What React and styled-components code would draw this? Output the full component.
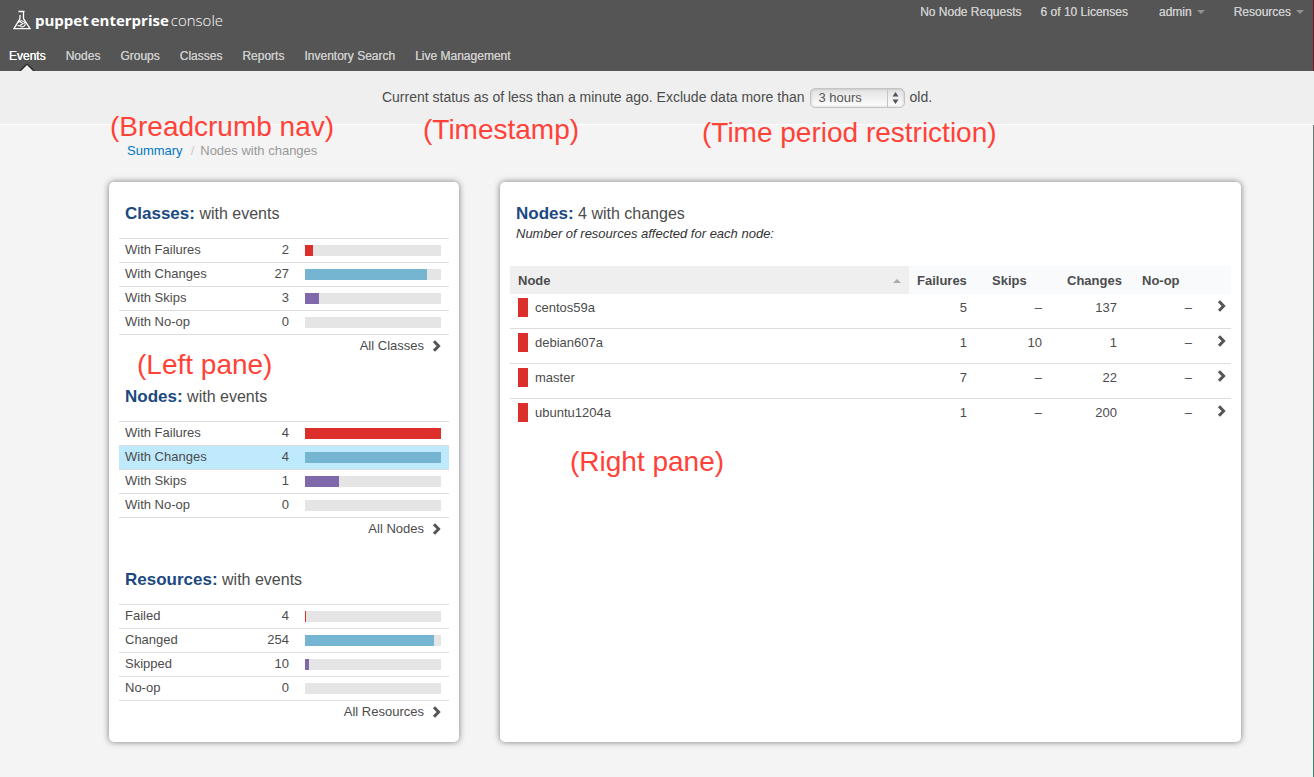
import React from "react";
import styled, { createGlobalStyle } from "styled-components";

const GlobalStyle = createGlobalStyle`
  * { box-sizing: border-box; }
  body {
    margin: 0;
    background: #f4f4f4;
    color: #4c4c4c;
    font: 13px/18px "Liberation Sans", Arial, sans-serif;
  }
  a { color: inherit; text-decoration: none; }
`;

const Page = styled.div`
  min-height: 100vh;
  position: relative;
  background: linear-gradient(#777, #3c8371) right / 1px 100% no-repeat;
`;

const Header = styled.header`
  background: #555;
  height: 71px;
  display: flex;
  justify-content: space-between;
  align-items: flex-start;
  border-right: 1px solid #7a1526;
`;

const Brand = styled.a`
  display: flex;
  align-items: center;
  height: 24px;
  margin: 8px 0 0 12px;
  color: #fff;
  font: 15px/24px "Open Sans", sans-serif;
`;

const BrandStrong = styled.span`
  display: flex;
  gap: 2px;
  font-weight: 700;
  margin-left: 3px;
`;

const BrandLight = styled.span`
  font-weight: 300;
  margin-left: 2px;
`;

const MainNav = styled.nav`
  display: flex;
  gap: 20px;
  padding: 15px 0 0 9px;
`;

const NavLink = styled.a`
  position: relative;
  height: 24px;
  font-size: 12px;
  color: ${(p) => (p.$active ? "#fff" : "#ccc")};
  text-shadow: 0 0 currentColor;
`;

const Pointer = styled.svg`
  position: absolute;
  left: 50%;
  bottom: 0;
  transform: translateX(-50%);
`;

const UserNav = styled.nav`
  display: flex;
  color: #ccc;
  font-size: 12px;
  padding: 3px 9px 0 0;
  text-shadow: 0 0 currentColor;
`;

const UserItem = styled.a`
  display: flex;
  align-items: center;
  gap: 5px;
  margin-left: ${(p) => p.$gap}px;
`;

const StatusBar = styled.form`
  display: flex;
  align-items: center;
  justify-content: center;
  gap: 5px;
  height: 54px;
  background: #efefef;
  border-bottom: 1px solid #fff;
  font-size: 14px;
  line-height: 20px;
`;

const StatusText = styled.label`
  padding-bottom: 2px;
`;

const SelectWrap = styled.span`
  position: relative;
  display: flex;
`;

const PeriodSelect = styled.select`
  appearance: none;
  width: 95px;
  height: 20px;
  padding: 0 8px;
  border: 1px solid #c4c4c4;
  border-radius: 5px;
  background: linear-gradient(#e2e2e2, #fdfdfd);
  box-shadow: inset 0 0 3px rgba(0, 0, 0, 0.2);
  color: #555;
  font: 13px/18px "Liberation Sans", Arial, sans-serif;
`;

const Stepper = styled.svg`
  position: absolute;
  right: 0;
  top: 0;
  pointer-events: none;
`;

const Content = styled.main`
  margin: 0 73px 0 109px;
  padding-bottom: 34px;
`;

const Breadcrumb = styled.nav`
  display: flex;
  height: 57px;
  padding: 17px 0 0 18px;
  color: #999;
`;

const Crumb = styled.a`
  color: #0077c2;
`;

const Slash = styled.span`
  color: #ccc;
  margin: 0 6px 0 8px;
`;

const Panes = styled.div`
  display: grid;
  grid-template-columns: 350px 1fr;
  gap: 41px;
`;

const Pane = styled.section`
  background: #fff;
  border-radius: 5px;
  box-shadow: 0 0 6px rgba(0, 0, 0, 0.5);
  padding: 20px 10px 15px;
`;

const Heading = styled.h2`
  margin: 0;
  padding-left: 6px;
  font-size: 16px;
  line-height: 24px;
  font-weight: 400;
`;

const Accent = styled.strong`
  font-size: 17px;
  color: #1b4980;
`;

const Note = styled.p`
  margin: 0 0 24px;
  padding-left: 6px;
  line-height: 16px;
  font-style: italic;
  color: #333;
`;

const Group = styled.div`
  height: 159px;
  margin-bottom: 24px;
  &:last-child { margin-bottom: 0; }
`;

const List = styled.ul`
  list-style: none;
  margin: 12px 0 0;
  padding: 0;
  border-top: 1px solid #ddd;
`;

const Item = styled.li`
  display: grid;
  grid-template-columns: 1fr 40px 136px;
  column-gap: 16px;
  align-items: start;
  height: 24px;
  padding: 0 8px 0 6px;
  line-height: 22px;
  border-bottom: 1px solid #ddd;
  background: ${(p) => (p.$selected ? "#bfe9fc" : "transparent")};
`;

const Count = styled.span`
  text-align: right;
`;

const Track = styled.span`
  height: 11px;
  margin-top: 6px;
  background: #e5e5e5;
`;

const Fill = styled.span`
  display: block;
  height: 11px;
  background: ${(p) => p.$color};
`;

const AllLink = styled.a`
  display: flex;
  justify-content: flex-end;
  align-items: center;
  gap: 8px;
  height: 22px;
  padding-right: 8px;
`;

const Table = styled.table`
  width: 100%;
  border-collapse: separate;
  border-spacing: 0;
  table-layout: fixed;
`;

const Th = styled.th`
  width: ${(p) => p.$width};
  height: 28px;
  padding: 2px 8px 0;
  text-align: left;
  background: ${(p) => (p.$sorted ? "#efefef" : "#f9fafc")};
`;

const SortHead = styled.span`
  display: flex;
  justify-content: space-between;
  align-items: center;
`;

const Td = styled.td`
  height: 35px;
  padding: 5px 17px 0 8px;
  vertical-align: top;
  text-align: right;
  border-bottom: 1px solid #ddd;
  tr:last-child > & { border-bottom-color: transparent; }
`;

const NameCell = styled(Td)`
  padding-top: 4px;
  text-align: left;
`;

const ArrowCell = styled(Td)`
  padding: 5px 5px 0 0;
`;

const NodeName = styled.a`
  display: flex;
  align-items: center;
  gap: 7px;
`;

const Swatch = styled.span`
  width: 10px;
  height: 19px;
  background: #dc2f2b;
`;

const Label = styled.span`
  position: absolute;
  left: ${(p) => p.$x}px;
  top: ${(p) => p.$y}px;
  color: #ff4238;
  font-size: 28px;
  line-height: 32px;
  white-space: nowrap;
  pointer-events: none;
`;

const Caret = () => (
  <svg width="8" height="4" viewBox="0 0 8 4"><path d="M0 0h8L4 4z" fill="#929292" /></svg>
);

const Chevron = () => (
  <svg width="9" height="12" viewBox="0 0 9 12">
    <path d="M2 1.200 6.600 6 2 10.800" fill="none" stroke="#555" strokeWidth="3" />
  </svg>
);

const Flask = () => (
  <svg width="20" height="21" viewBox="0 0 20 21" fill="none" stroke="#fff">
    <path d="M6.500 1.500h6M11.500 2v6.500L18 18.700H2L8 8.500V5" strokeWidth="1.300" />
    <path d="M6 12.500c1.500-2.500 6-2.500 7 .5s-2 4.500-4.500 3.500M7.500 11.500l3.500 2-3 2M5.500 15.500l3 .5" strokeWidth="1.100" />
  </svg>
);

const RED = "#dc2f2b";
const BLUE = "#76b5d1";
const PURPLE = "#8069ab";

const groups = [
  {
    title: "Classes", rows: [
      ["With Failures", 2, 6, RED], ["With Changes", 27, 90, BLUE],
      ["With Skips", 3, 10, PURPLE], ["With No-op", 0, 0, RED],
    ],
  },
  {
    title: "Nodes", selected: 1, rows: [
      ["With Failures", 4, 100, RED], ["With Changes", 4, 100, BLUE],
      ["With Skips", 1, 25, PURPLE], ["With No-op", 0, 0, RED],
    ],
  },
  {
    title: "Resources", rows: [
      ["Failed", 4, 1, RED], ["Changed", 254, 95, BLUE],
      ["Skipped", 10, 3, PURPLE], ["No-op", 0, 0, RED],
    ],
  },
];

const nodes = [
  ["centos59a", "5", "–", "137", "–"],
  ["debian607a", "1", "10", "1", "–"],
  ["master", "7", "–", "22", "–"],
  ["ubuntu1204a", "1", "–", "200", "–"],
];

const labels = [
  ["(Breadcrumb nav)", 110, 111],
  ["(Timestamp)", 423, 114],
  ["(Time period restriction)", 702, 117],
  ["(Left pane)", 137, 349],
  ["(Right pane)", 570, 446],
];

const sections = ["Events", "Nodes", "Groups", "Classes", "Reports", "Inventory Search", "Live Management"];

export default function App() {
  return (
    <Page>
      <GlobalStyle />
      <Header>
        <div>
          <Brand href="#">
            <Flask />
            <BrandStrong><span>puppet</span><span>enterprise</span></BrandStrong>
            <BrandLight>console</BrandLight>
          </Brand>
          <MainNav>
            {sections.map((name, i) => (
              <NavLink href="#" key={name} $active={i === 0}>
                {name}
                {i === 0 && (
                  <Pointer width="24" height="8" viewBox="0 0 24 8">
                    <defs>
                      <radialGradient id="glow" cx="12" cy="8" r="12" gradientUnits="userSpaceOnUse">
                        <stop offset="0.400" stopColor="#222" />
                        <stop offset="1" stopColor="#555" />
                      </radialGradient>
                    </defs>
                    <path d="M4 8 12 0l8 8z" fill="url(#glow)" />
                    <path d="M6 8 12 2l6 6z" fill="#efefef" />
                  </Pointer>
                )}
              </NavLink>
            ))}
          </MainNav>
        </div>
        <UserNav>
          <UserItem href="#" $gap={0}>No Node Requests</UserItem>
          <UserItem href="#" $gap={19}>6 of 10 Licenses</UserItem>
          <UserItem href="#" $gap={31}>admin <Caret /></UserItem>
          <UserItem href="#" $gap={29}>Resources <Caret /></UserItem>
        </UserNav>
      </Header>
      <StatusBar>
        <StatusText htmlFor="period">Current status as of less than a minute ago. Exclude data more than</StatusText>
        <SelectWrap>
          <PeriodSelect id="period"><option>3 hours</option></PeriodSelect>
          <Stepper width="18" height="20" viewBox="0 0 18 20">
            <path d="M.5 1v18" stroke="#c4c4c4" />
            <path d="M5.500 8.500 8.500 4 11.500 8.500zM5.500 11.500h6L8.500 16z" fill="#555" />
          </Stepper>
        </SelectWrap>
        <StatusText as="span">old.</StatusText>
      </StatusBar>
      <Content>
        <Breadcrumb>
          <Crumb href="#">Summary</Crumb><Slash>/</Slash><span>Nodes with changes</span>
        </Breadcrumb>
        <Panes>
          <Pane>
            {groups.map((g) => (
              <Group key={g.title}>
                <Heading><Accent>{g.title}:</Accent> with events</Heading>
                <List>
                  {g.rows.map(([name, count, share, color], i) => (
                    <Item key={name} $selected={g.selected === i}>
                      <a href="#">{name}</a>
                      <Count>{count}</Count>
                      <Track><Fill $color={color} style={{ width: `${share}%` }} /></Track>
                    </Item>
                  ))}
                </List>
                <AllLink href="#">All {g.title} <Chevron /></AllLink>
              </Group>
            ))}
          </Pane>
          <Pane>
            <Heading><Accent>Nodes:</Accent> 4 with changes</Heading>
            <Note>Number of resources affected for each node:</Note>
            <Table>
              <thead>
                <tr>
                  <Th $sorted>
                    <SortHead>
                      Node
                      <svg width="8" height="4" viewBox="0 0 8 4"><path d="M0 4h8L4 0z" fill="#aaa" /></svg>
                    </SortHead>
                  </Th>
                  <Th $width="75px">Failures</Th>
                  <Th $width="75px">Skips</Th>
                  <Th $width="75px">Changes</Th>
                  <Th $width="75px">No-op</Th>
                  <Th $width="22px" />
                </tr>
              </thead>
              <tbody>
                {nodes.map(([name, ...counts]) => (
                  <tr key={name}>
                    <NameCell><NodeName href="#"><Swatch />{name}</NodeName></NameCell>
                    {counts.map((c, i) => <Td key={i}>{c}</Td>)}
                    <ArrowCell><a href="#" aria-label={name}><Chevron /></a></ArrowCell>
                  </tr>
                ))}
              </tbody>
            </Table>
          </Pane>
        </Panes>
      </Content>
      {labels.map(([text, x, y]) => <Label key={text} $x={x} $y={y}>{text}</Label>)}
    </Page>
  );
}
